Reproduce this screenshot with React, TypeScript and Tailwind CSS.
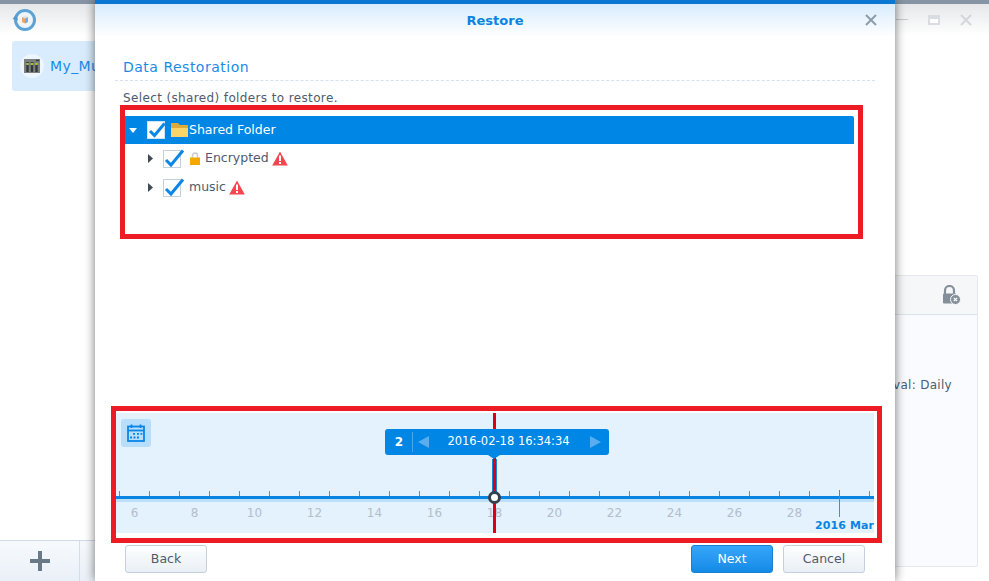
const ticks = Array.from({ length: 26 }, (_, i) => i);
const labels = [6, 8, 10, 12, 14, 16, 18, 20, 22, 24, 26, 28];

function CheckBox({ big }: { big?: boolean }) {
  return (
    <span className={`relative block h-[18px] w-[18px] shrink-0 border bg-white ${big ? "border-[#cfe4f6]" : "border-[#c3d0de]"}`}>
      <svg viewBox="0 0 22 20" className="absolute left-[-1px] top-[-3px] h-[20px] w-[22px]">
        <path d={big ? "M3 12 L7.5 16.5 L17.5 4.5" : "M3 12 L8 17 L20 2.5"} fill="none" stroke="#0a86e6" strokeWidth="3" />
      </svg>
    </span>
  );
}

function Warn() {
  return (
    <svg viewBox="0 0 16 15" className="h-[15px] w-[16px] shrink-0">
      <path d="M8 0.5 L15.8 14.5 L0.2 14.5 Z" fill="#f4464e" />
      <rect x="7" y="4.5" width="2" height="5.5" fill="#fff" />
      <rect x="7" y="11" width="2" height="2" fill="#fff" />
    </svg>
  );
}

function Caret({ open }: { open?: boolean }) {
  if (open) {
    return (
      <svg viewBox="0 0 8 5" className="h-[5px] w-[8px] shrink-0">
        <path d="M0 0 H8 L4 5 Z" fill="#fff" />
      </svg>
    );
  }
  return (
    <svg viewBox="0 0 5 9" className="h-[9px] w-[5px] shrink-0">
      <path d="M0 0 L5 4.5 L0 9 Z" fill="#3f4a55" />
    </svg>
  );
}

function Button({ label, primary, className }: { label: string; primary?: boolean; className?: string }) {
  return (
    <button
      className={`h-[28px] w-[82px] rounded-[3px] border text-[12.5px] ${
        primary
          ? "border-[#1a7fd0] bg-gradient-to-b from-[#36a6fb] to-[#128ae6] text-white"
          : "border-[#c5d0de] bg-gradient-to-b from-[#fdfefe] to-[#e9eff5] text-[#4f5b6c]"
      } ${className ?? ""}`}
    >
      {label}
    </button>
  );
}

function Background() {
  return (
    <div className="flex h-full flex-col bg-white">
      <div className="flex h-[35px] shrink-0 items-center justify-between border-t-4 border-[#8794a3] bg-gradient-to-b from-[#e5e7e9] to-white pl-[12px] pr-[17px]">
        <svg viewBox="0 0 24 24" className="h-[24px] w-[24px]">
          <circle cx="13" cy="12" r="9.5" fill="#eef4f8" stroke="#5ba3d6" strokeWidth="3" />
          <path d="M4.5 6 L0.5 11 L6 12.5 Z" fill="#4f9bd2" />
          <path d="M10 9 L13 7.5 L16 9 L13 10.5 Z" fill="#dfe6ea" />
          <path d="M10 9 L13 10.5 V15.5 L10 14 Z" fill="#e9a66a" />
          <path d="M16 9 L13 10.5 V15.5 L16 14 Z" fill="#6fb0dc" />
        </svg>
        <div className="flex items-center gap-[20px]">
          <span className="h-[1px] w-[12px] bg-[#c4c9ce]" />
          <span className="flex h-[10px] w-[12px] items-center justify-center bg-[#d9dce0]">
            <span className="mt-[2px] h-[4px] w-[8px] bg-white" />
          </span>
          <svg viewBox="0 0 12 12" className="h-[12px] w-[12px]">
            <path d="M1 1 L11 11 M11 1 L1 11" stroke="#d3d6da" strokeWidth="2" />
          </svg>
        </div>
      </div>
      <div className="flex min-h-0 flex-1">
        <div className="flex w-[240px] shrink-0 flex-col">
          <div className="ml-[12px] mt-[6px] flex h-[50px] w-[216px] items-center gap-[6px] rounded-[3px] bg-[#d8ecfd] pl-[8px]">
            <span className="flex h-[24px] w-[24px] items-center justify-center rounded-full bg-[#eef6fd]">
              <svg viewBox="0 0 16 14" className="h-[14px] w-[16px]">
                <rect width="16" height="14" fill="#7d807f" />
                <path d="M3.5 3 V13 M8 3 V13 M12.5 5 V13" stroke="#33383a" strokeWidth="2.4" />
                <path d="M3.5 4 V6 M8 4 V6 M12.5 4 V6" stroke="#a5c93a" strokeWidth="2.4" />
                <path d="M12 1.5 H15" stroke="#33383a" strokeWidth="1.4" />
              </svg>
            </span>
            <span className="text-[14px] tracking-[0.4px] text-[#1a8be8]">My_Music</span>
          </div>
          <div className="mt-auto flex h-[41px] border-t border-[#cfdbe8] bg-gradient-to-b from-[#f7fafd] to-[#e9f0f7]">
            <div className="flex w-[80px] items-center justify-center border-r border-[#d3deea]">
              <svg viewBox="0 0 20 20" className="h-[20px] w-[20px]">
                <path d="M10 0 V20 M0 10 H20" stroke="#6b7a88" strokeWidth="4" />
              </svg>
            </div>
          </div>
        </div>
        <div className="min-w-0 flex-1 pb-[14px] pr-[11px] pt-[240px]">
          <div className="flex h-full flex-col rounded-[2px] border border-[#e5e8ec] bg-[#fafbfe]">
            <div className="flex h-[39px] shrink-0 items-center justify-end border-b border-[#d9e3ec] bg-[#f6f7f9] pr-[16px]">
              <svg viewBox="0 0 20 20" className="h-[20px] w-[20px]">
                <path d="M4 9 V5.5 a4.5 4.5 0 0 1 9 0 V9" fill="none" stroke="#858f99" strokeWidth="2.2" />
                <rect x="2" y="8.5" width="13" height="10" rx="1" fill="#858f99" />
                <circle cx="14.5" cy="14.5" r="5" fill="#858f99" stroke="#f6f7f9" strokeWidth="1" />
                <path d="M12.8 12.8 L16.2 16.2 M16.2 12.8 L12.8 16.2" stroke="#fff" strokeWidth="1.2" />
              </svg>
            </div>
            <p className="mt-[62px] self-end whitespace-nowrap pr-[25px] text-[12px] leading-[16px] tracking-[0.3px] text-[#4f5b6c]">
              Backup interval: Daily
            </p>
          </div>
        </div>
      </div>
    </div>
  );
}

function Timeline() {
  return (
    <div className="relative h-[120px] w-[758px] overflow-hidden bg-[#e3f2fd]">
      <div className="absolute left-[5px] top-[6px] flex h-[28px] w-[30px] items-center justify-center rounded-[3px] bg-[#b8defc]">
        <svg viewBox="0 0 18 18" className="h-[18px] w-[18px]">
          <rect x="1" y="2.5" width="16" height="14.5" fill="none" stroke="#0a86e6" strokeWidth="1.8" />
          <path d="M1 6.5 H17" stroke="#0a86e6" strokeWidth="1.8" />
          <path d="M4.5 0.5 V4 M13.5 0.5 V4" stroke="#0a86e6" strokeWidth="1.8" />
          <path d="M6 9 h2 v1.8 h-2 z M10 9 h2 v1.8 h-2 z M13.5 9 h1.8 v1.8 h-1.8 z M3 12.6 h2 v1.8 h-2 z M6.5 12.6 h2 v1.8 h-2 z M10 12.6 h2 v1.8 h-2 z" fill="#0a86e6" />
        </svg>
      </div>

      {/* ruler */}
      <div className="absolute inset-x-0 top-[78px] flex h-[5px] pl-[3px]">
        {ticks.map((t) => (
          <span key={t} className="w-[30px] shrink-0 border-l border-[#3f97dc]" />
        ))}
      </div>
      <div className="absolute inset-x-0 top-[83px] h-[3px] bg-[#0a84e2]" />
      <div className="absolute inset-x-0 top-[86px] h-[3px] bg-[#bcdffa]" />
      <div className="absolute left-[723px] top-[77px] h-[27px] w-[1px] bg-[#3f8fd6]" />

      <div className="absolute left-[-12px] top-[92px] flex translate-x-[0.5px] text-[12px] leading-[16px] text-[#b5bdc9]">
        {labels.map((n) => (
          <span key={n} className="w-[60px] text-center">
            {n}
          </span>
        ))}
      </div>
      <span className="absolute right-0 top-[106px] whitespace-nowrap text-[11px] font-bold leading-[14px] tracking-[0.1px] text-[#0a84e2]">
        2016 Mar
      </span>

      {/* current position */}
      <div className="absolute left-[377px] top-0 h-full w-[3px] bg-[#dd0010]" />
      <div className="absolute left-[376px] top-[46px] h-[34px] w-[1px] bg-[#1a86d8]" />
      <div className="absolute left-[380px] top-[46px] h-[34px] w-[1px] bg-[#1a86d8]" />
      <div className="absolute left-[372px] top-[78px] h-[13px] w-[13px] rounded-full border-[3.5px] border-[#33404d] bg-white" />

      <div className="absolute left-[269px] top-[16px] flex h-[26px] w-[224px] items-center rounded-[3px] bg-[#0086e5] text-white">
        <span className="w-[27px] pl-[1px] text-center text-[12px] font-bold">2</span>
        <span className="h-[20px] w-[1px] bg-[#4aa8ec]" />
        <svg viewBox="0 0 11 12" className="ml-[5px] h-[12px] w-[11px]">
          <path d="M11 0 V12 L0 6 Z" fill="#5aaeef" />
        </svg>
        <span className="flex-1 whitespace-nowrap pr-[2px] text-center text-[11.5px]">2016-02-18 16:34:34</span>
        <svg viewBox="0 0 11 12" className="mr-[8px] h-[12px] w-[11px]">
          <path d="M0 0 V12 L11 6 Z" fill="#5aaeef" />
        </svg>
        <svg viewBox="0 0 12 4" className="absolute left-[103px] top-[26px] h-[4px] w-[12px]">
          <path d="M0 0 H12 L6 4 Z" fill="#0086e5" />
        </svg>
      </div>
    </div>
  );
}

export default function App() {
  const rows = [
    { name: "Encrypted", lock: true },
    { name: "music", lock: false },
  ];
  return (
    <div className="relative h-[581px] w-[989px] overflow-hidden font-['DejaVu_Sans',sans-serif]">
      <Background />

      <div className="absolute left-[95px] top-0 flex h-full w-[800px] flex-col border-t-4 border-[#0a78d2] bg-white shadow-[0_0_10px_rgba(0,0,0,0.55)]">
        <div className="relative flex h-[33px] shrink-0 items-center justify-center bg-gradient-to-b from-[#d8ecfd] to-white">
          <span className="text-[13px] font-bold text-[#0a84e2]">Restore</span>
          <svg viewBox="0 0 12 12" className="absolute right-[18px] top-[10px] h-[12px] w-[12px]">
            <path d="M1 1 L11 11 M11 1 L1 11" stroke="#8c99a6" strokeWidth="1.8" />
          </svg>
        </div>

        <div className="mx-[20px] flex h-[44px] shrink-0 items-end border-b border-dashed border-[#d5e1ec] pb-[4px] pl-[8px]">
          <span className="text-[14px] leading-[18px] tracking-[0.5px] text-[#1a8be8]">Data Restoration</span>
        </div>
        <p className="ml-[28px] h-[24px] shrink-0 pt-[9px] text-[12px] leading-[16px] tracking-[0.37px] text-[#4f5b6c]">
          Select (shared) folders to restore.
        </p>

        <div className="ml-[25px] h-[134px] w-[743px] shrink-0 border-[5px] border-[#ed1c24] pt-[6px]">
          <div className="flex h-[28px] w-[729px] items-center rounded-tr-[2px] bg-[#0086e5] pl-[4px] text-[12.5px] text-white">
            <Caret open />
            <span className="ml-[10px]">
              <CheckBox big />
            </span>
            <svg viewBox="0 0 17 14" className="ml-[6px] mr-[1px] h-[14px] w-[17px] shrink-0">
              <path d="M0 0 H7 L9 2 H17 V14 H0 Z" fill="#e0a93a" />
              <path d="M0 5 H17 V14 H0 Z" fill="#fbd568" />
            </svg>
            <span>Shared Folder</span>
          </div>
          {rows.map((r) => (
            <div key={r.name} className="flex h-[29px] items-center pl-[23px] text-[12.5px] text-[#4f5b6c]">
              <Caret />
              <span className="ml-[10px]">
                <CheckBox />
              </span>
              {r.lock ? (
                <svg viewBox="0 0 10 13" className="ml-[9px] mr-[5px] h-[13px] w-[10px] shrink-0">
                  <path d="M2.5 6 V3.5 a2.5 2.5 0 0 1 5 0 V6" fill="none" stroke="#c9ccd0" strokeWidth="1.5" />
                  <rect y="5.5" width="10" height="7.5" fill="#f5a800" />
                </svg>
              ) : (
                <span className="w-[8px]" />
              )}
              <span className="mr-[3px]">{r.name}</span>
              <Warn />
            </div>
          ))}
        </div>

        <div className="flex-1" />

        <div className="ml-[16px] h-[137px] w-[771px] shrink-0 border-[5px] border-[#ed1c24] pt-[2px]">
          <Timeline />
        </div>

        <div className="flex h-[38px] shrink-0 items-start pl-[30px] pt-[2px]">
          <Button label="Back" />
          <Button label="Next" primary className="ml-auto" />
          <Button label="Cancel" className="ml-[10px] mr-[30px]" />
        </div>
      </div>
    </div>
  );
}
